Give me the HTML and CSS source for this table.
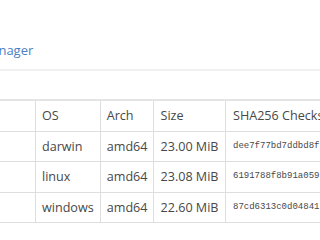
FILE: index.html
```html
<!DOCTYPE html>
<html lang="en">
<head>
<meta charset="utf-8">
<title>Downloads</title>
<link rel="stylesheet" href="styles.css">
</head>
<body>
<div class="page">
  <p class="intro"><a href="#">Install via package manager</a></p>
  <hr class="rule">
  <table class="downloads">
    <thead>
      <tr><th class="kind">Kind</th><th>OS</th><th>Arch</th><th>Size</th><th class="sum">SHA256 Checksum</th></tr>
    </thead>
    <tbody>
      <tr><td class="kind">Archive</td><td>darwin</td><td>amd64</td><td>23.00 MiB</td><td class="sum hash">dee7f77bd7ddbd8f1b6cbb3a1c2e8e6f0b1e7e1d</td></tr>
      <tr><td class="kind">Archive</td><td>linux</td><td>amd64</td><td>23.08 MiB</td><td class="sum hash">6191788f8b91a0593c8f9e2a4b7d1c0e5f6a3b2c</td></tr>
      <tr><td class="kind">Archive</td><td>windows</td><td>amd64</td><td>22.60 MiB</td><td class="sum hash">87cd6313c0d048417e2b9a5c1d3f4e6a8b0c2d4e</td></tr>
    </tbody>
  </table>
</div>
</body>
</html>
```
FILE: styles.css
```css
html, body {
  margin: 0;
  padding: 0;
  background: #fff;
  overflow: hidden;
}
body {
  font-family: "Open Sans", "DejaVu Sans", sans-serif;
  color: #484848;
  font-size: 12.6px;
  width: 320px;
  height: 240px;
}
.page {
  margin-left: -140px;
  padding-top: 40px;
  width: 1200px;
}
.intro {
  margin: 0 0 0 6px;
  font-size: 13px;
  line-height: 20px;
  white-space: nowrap;
}
.intro a {
  color: #4a7fc1;
  text-decoration: none;
}
.rule {
  margin: 9px 0 0 0;
  border: 0;
  border-top: 2px solid #f0f0f0;
  width: 600px;
}
.downloads {
  margin-top: 28px;
  border-collapse: collapse;
  white-space: nowrap;
  border-top: 2px solid #e4e4e4;
}
.downloads th,
.downloads td {
  text-align: left;
  font-weight: normal;
  padding: 6px 6px;
  line-height: 17.5px;
  border-bottom: 1px solid #dedede;
  border-left: 1px solid #dedede;
  vertical-align: middle;
}
.downloads .kind {
  width: 163px;
  border-left: 0;
}
.downloads .sum {
  padding-left: 7.5px;
}
.downloads .hash {
  font-family: "Liberation Mono", "DejaVu Sans Mono", monospace;
  font-size: 9px;
}
```
